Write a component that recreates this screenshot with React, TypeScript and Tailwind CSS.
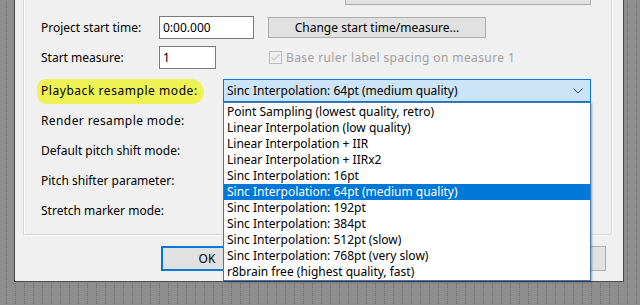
import { ReactNode } from 'react';

const listItems = [
  'Point Sampling (lowest quality, retro)',
  'Linear Interpolation (low quality)',
  'Linear Interpolation + IIR',
  'Linear Interpolation + IIRx2',
  'Sinc Interpolation: 16pt',
  'Sinc Interpolation: 64pt (medium quality)',
  'Sinc Interpolation: 192pt',
  'Sinc Interpolation: 384pt',
  'Sinc Interpolation: 512pt (slow)',
  'Sinc Interpolation: 768pt (very slow)',
  'r8brain free (highest quality, fast)',
];

const Combo = ({ value, active }: { value?: string; active?: boolean }) => (
  <div
    className={`flex h-[23px] w-[368px] items-center justify-between border pl-[3px] pr-[7px] ${
      active ? 'border-[#0078d7] bg-[#cce4f7]' : 'border-[#adadad] bg-[#e1e1e1]'
    }`}
  >
    <span>{value}</span>
    <svg width="10" height="6" viewBox="0 0 10 6" className="text-[#404040]">
      <path d="M0.5 0.5 L5 5 L9.5 0.5" fill="none" stroke="currentColor" strokeWidth="1" />
    </svg>
  </div>
);

// rows whose combos sit under the open list
const Row = ({ label }: { label: ReactNode }) => (
  <div className="mt-[7px] flex h-[23px] items-center">
    <div className="w-[182px] shrink-0">{label}</div>
    <Combo />
  </div>
);

export default function App() {
  return (
    <div className="relative h-[305px] w-[640px] overflow-hidden bg-[#8e8e8e] bg-[linear-gradient(to_bottom,#8e8e8e_50%,transparent_50%),linear-gradient(to_right,#6c6c6c_1px,transparent_1px),linear-gradient(to_right,transparent_51px,#111_51px,#111_52px,transparent_52px)] bg-[length:9px_2px,9px_2px,640px_2px] bg-[position:0_0,6px_0,0_0] font-['Noto_Sans',sans-serif] text-[12px] leading-[16px] text-black">
      <div className="pl-[14px]">
        <div className="w-[610px] border-x border-b border-[#4a4a4a] bg-[#f0f0f0]">
          {/* group box */}
          <div className="ml-[8px] h-[235px] w-[589px] border-x border-b border-[#d5d5d5] shadow-[1px_1px_0_#fff,inset_1px_0_0_#fff]">
            <div className="ml-[321px] h-[5px] w-[246px] border-x border-b border-[#adadad] bg-[#e1e1e1]" />
            <div className="pl-[17px]">
              <div className="mt-[11px] flex h-[23px] items-center">
                <div className="w-[118px] shrink-0">Project start time:</div>
                <div className="flex h-[23px] w-[95px] items-center border border-[#7a7a7a] bg-white pl-[3px]">0:00.000</div>
                <div className="ml-[14px] flex h-[21px] w-[218px] items-center justify-center border border-[#adadad] bg-[#e1e1e1]">
                  Change start time/measure...
                </div>
              </div>
              <div className="mt-[7px] flex h-[23px] items-center">
                <div className="w-[118px] shrink-0">Start measure:</div>
                <div className="flex h-[23px] w-[57px] items-center border border-[#7a7a7a] bg-white pl-[3px]">1</div>
                <div className="ml-[53px] flex h-[13px] w-[13px] items-center justify-center border border-[#bcbcbc] bg-[#f0f0f0]">
                  <svg width="11" height="11" viewBox="0 0 11 11">
                    <path d="M1.5 5.5 L4 8 L9.5 2.5" fill="none" stroke="#c4c4c4" strokeWidth="1.2" />
                  </svg>
                </div>
                <div className="ml-[4px] tracking-[0.4px] text-[#a0a0a0]">Base ruler label spacing on measure 1</div>
              </div>
              <div className="mt-[10px] flex h-[23px] items-center">
                <div className="w-[182px] shrink-0">
                  <span className="relative inline-block">
                    <span className="absolute left-[-4px] right-[-6px] top-[-4px] bottom-[-5px] rounded-[9px_14px_12px_10px] bg-[#eef254] blur-[0.5px]" />
                    <span className="relative tracking-[0.55px]">Playback resample mode:</span>
                  </span>
                </div>
                <Combo value="Sinc Interpolation: 64pt (medium quality)" active />
              </div>
              <Row label={<span className="tracking-[0.4px]">Render resample mode:</span>} />
              <Row label="Default pitch shift mode:" />
              <Row label="Pitch shifter parameter:" />
              <Row label="Stretch marker mode:" />
            </div>
          </div>
          {/* buttons */}
          <div className="mt-[11px] mb-[10px] flex h-[25px] items-center">
            <div className="ml-[146px] flex h-[25px] w-[92px] items-center justify-center border-2 border-[#0078d7] bg-[#e1e1e1]">
              OK
            </div>
            <div className="ml-[263px] h-[25px] w-[90px] border border-[#adadad] bg-[#e1e1e1]" />
          </div>
        </div>
      </div>

      {/* open dropdown list */}
      <div className="absolute left-[223px] top-[102px] w-[368px] border border-[#3f7cb5] bg-white pt-[1px] shadow-[1px_1px_2px_rgba(0,0,0,0.35)]">
        {listItems.map((item, i) => (
          <div
            key={item}
            className={`h-[16px] pl-[3px] leading-[16px] ${i === 5 ? 'bg-[#0078d7] text-white' : ''}`}
          >
            {item}
          </div>
        ))}
      </div>
    </div>
  );
}
